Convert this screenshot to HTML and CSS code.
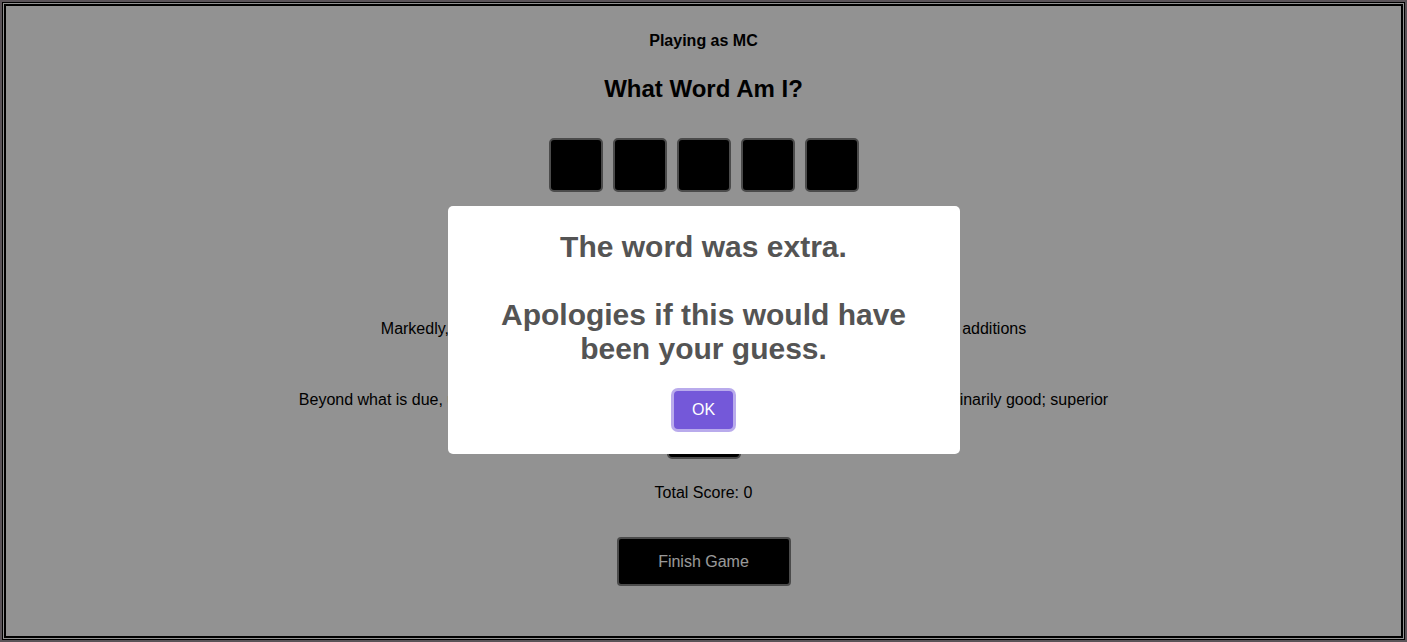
FILE: index.html
```html
<!DOCTYPE html>
<html lang="en">
<head>
<meta charset="utf-8">
<title>What Word Am I?</title>
<link rel="stylesheet" href="styles.css">
</head>
<body>
<div class="frame">
  <div class="frame-inner">
    <main class="game">
      <p class="player">Playing as MC</p>
      <h2 class="title">What Word Am I?</h2>
      <div class="tiles">
        <div class="tile"></div>
        <div class="tile"></div>
        <div class="tile"></div>
        <div class="tile"></div>
        <div class="tile"></div>
      </div>
      <section class="clues">
        <p class="clue">Markedly, exceptionally; something extra, such as an optional feature or one of its additions</p>
        <p class="clue clue-second">Beyond what is due, usual, expected or necessary; additional; supplementary; more; extraordinarily good; superior</p>
        <button class="hint-btn" type="button">Hint</button>
      </section>
      <p class="score">Total Score: 0</p>
      <button class="finish-btn" type="button">Finish Game</button>
    </main>
  </div>
</div>

<div class="overlay">
  <div class="popup" role="dialog">
    <h2 class="popup-title">The word was extra.<br><br>Apologies if this would have been your guess.</h2>
    <div class="popup-actions">
      <button class="popup-ok" type="button">OK</button>
    </div>
  </div>
</div>
</body>
</html>
```

FILE: styles.css
```css
html {
  background: #988c94;
}

body {
  margin: 0;
  padding: 2px;
  height: 642px;
  box-sizing: border-box;
  font-family: "Liberation Sans", Arial, sans-serif;
  font-size: 16px;
  color: #000;
}

.frame {
  height: 100%;
  box-sizing: border-box;
  border: 1px solid #000;
  padding: 1px;
  background: #f3f3f3;
}

.frame-inner {
  height: 100%;
  box-sizing: border-box;
  border: 2px solid #000;
  background: #f3f3f3;
}

.game {
  display: flex;
  flex-direction: column;
  align-items: center;
  padding-top: 26px;
  text-align: center;
}

.player {
  margin: 0;
  font-weight: bold;
  font-size: 16px;
}

.title {
  margin: 25px 0 0;
  font-size: 24px;
  font-weight: bold;
}

.tiles {
  display: flex;
  gap: 10px;
  margin-top: 35px;
}

.tile {
  width: 54px;
  height: 54px;
  box-sizing: border-box;
  background: #000;
  border: 2px solid #7d7d7d;
  border-radius: 5px;
}

.clues {
  display: flex;
  flex-direction: column;
  align-items: center;
  margin-top: 128px;
}

.clue {
  margin: 0;
}

.clue-second {
  margin-top: 53px;
}

.hint-btn {
  margin-top: 10px;
  width: 74px;
  height: 40px;
  background: #000;
  color: #fff;
  border: 2px solid #7d7d7d;
  border-radius: 5px;
  font-family: inherit;
  font-size: 16px;
}

.score {
  margin: 25px 0 0;
}

.finish-btn {
  margin-top: 35px;
  width: 174px;
  height: 49px;
  background: #000;
  color: #fff;
  border: 2px solid #7d7d7d;
  border-radius: 4px;
  font-family: inherit;
  font-size: 16px;
}

.overlay {
  position: fixed;
  inset: 0;
  background: rgba(0, 0, 0, 0.4);
  display: flex;
  justify-content: center;
  align-items: flex-start;
  padding-top: 206px;
  box-sizing: border-box;
}

.popup {
  width: 512px;
  box-sizing: border-box;
  background: #fff;
  border-radius: 5px;
  padding: 0 0 20px;
  font-family: "Liberation Sans", Arial, sans-serif;
}

.popup-title {
  margin: 0;
  padding: 24px 30px 0;
  color: #545454;
  font-size: 30px;
  font-weight: bold;
  text-align: center;
  line-height: normal;
}

.popup-actions {
  display: flex;
  justify-content: center;
  margin-top: 20px;
}

.popup-ok {
  margin: 5px;
  padding: 10px 17.6px;
  background: #7458d9;
  color: #fff;
  border: 0;
  border-radius: 4px;
  font-family: inherit;
  font-size: 16px;
  box-shadow: 0 0 0 3px rgba(116, 88, 217, 0.5);
}
```
